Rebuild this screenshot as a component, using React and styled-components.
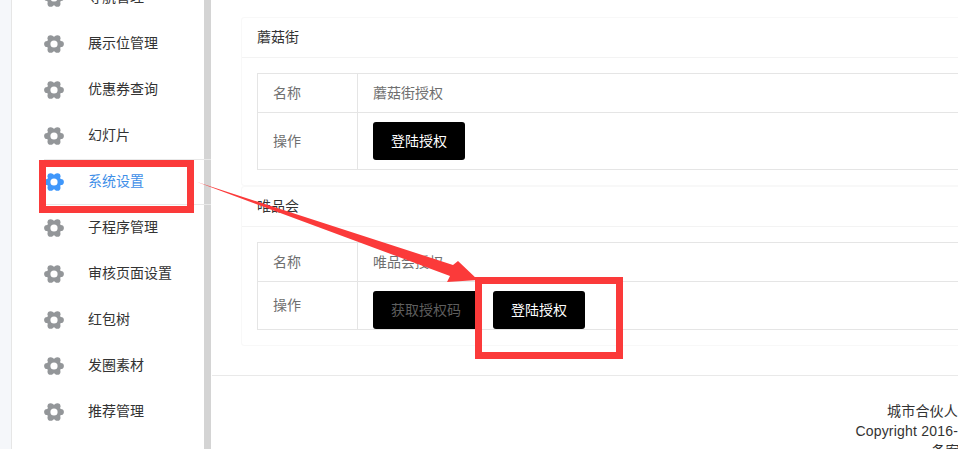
import React from "react";
import styled, { createGlobalStyle } from "styled-components";

const menus = [
  "导航管理",
  "展示位管理",
  "优惠券查询",
  "幻灯片",
  "系统设置",
  "子程序管理",
  "审核页面设置",
  "红包树",
  "发圈素材",
  "推荐管理",
];

const GearIcon = ({ active }) => {
  const color = active ? "#3f97fb" : "#939699";
  return (
    <Gear viewBox="0 0 20 20">
      {[0, 60, 120, 180, 240, 300].map((deg) => (
        <circle
          key={deg}
          cx={10 + 6.8 * Math.cos((deg * Math.PI) / 180)}
          cy={10 + 6.6 * Math.sin((deg * Math.PI) / 180)}
          r="3.1"
          fill={color}
        />
      ))}
      <circle cx="10" cy="10" r="7.4" fill={color} />
      <circle cx="10" cy="10" r="3.6" fill="#fff" />
    </Gear>
  );
};

const App = () => {
  return (
    <Page>
      <GlobalStyle />
      <Strip />
      <Sidebar>
        <Menu>
          {menus.map((name) => (
            <MenuItem key={name} $active={name === "系统设置"}>
              <GearIcon active={name === "系统设置"} />
              <MenuText>{name}</MenuText>
            </MenuItem>
          ))}
        </Menu>
        <ScrollThumb />
      </Sidebar>
      <Main>
        <Content>
          <Panel>
            <PanelTitle>蘑菇街</PanelTitle>
            <PanelBody>
              <Table>
                <tbody>
                  <Row>
                    <LabelCell>名称</LabelCell>
                    <Cell>蘑菇街授权</Cell>
                  </Row>
                  <Row $height={57}>
                    <LabelCell>操作</LabelCell>
                    <Cell>
                      <Button>登陆授权</Button>
                    </Cell>
                  </Row>
                </tbody>
              </Table>
            </PanelBody>
          </Panel>
          <Panel>
            <PanelTitle>唯品会</PanelTitle>
            <PanelBody>
              <Table>
                <tbody>
                  <Row>
                    <LabelCell>名称</LabelCell>
                    <Cell>唯品会授权</Cell>
                  </Row>
                  <Row $height={48}>
                    <LabelCell $lift>操作</LabelCell>
                    <ButtonCell>
                      <Button $muted>获取授权码</Button>
                      <Button>登陆授权</Button>
                    </ButtonCell>
                  </Row>
                </tbody>
              </Table>
            </PanelBody>
          </Panel>
        </Content>
        <Footer>
          <FooterLine>城市合伙人</FooterLine>
          <FooterLine>Copyright 2016-</FooterLine>
          <FooterClipped>备案号</FooterClipped>
        </Footer>
      </Main>
      <MarkBox $x={39} $y={160} $w={155} $h={53} />
      <MarkBox $x={475} $y={277} $w={148} $h={82} />
      <Arrow viewBox="0 0 958 449">
        <polygon
          points="197,182 453,265 458,261 478,280 447,282 450,276"
          fill="#fb3a3a"
        />
      </Arrow>
    </Page>
  );
};

export default App;

const GlobalStyle = createGlobalStyle`
  html, body {
    margin: 0;
    padding: 0;
    background: #fff;
  }
  * {
    box-sizing: border-box;
  }
`;

const Page = styled.div`
  position: relative;
  display: flex;
  width: 958px;
  height: 449px;
  overflow: hidden;
  background: #fff;
  font-family: "Liberation Sans", "Noto Sans CJK SC", sans-serif;
  font-size: 14px;
  color: #333;
`;

const Strip = styled.div`
  flex: 0 0 12px;
  background: #f5f7fa;
  border-right: 1px solid #e6e6e6;
`;

const Sidebar = styled.aside`
  position: relative;
  flex: 0 0 200px;
  display: flex;
`;

const Menu = styled.ul`
  flex: 0 0 192px;
  margin: -25px 0 0;
  padding: 0 0 0 32px;
  list-style: none;
`;

const MenuItem = styled.li`
  position: relative;
  z-index: 1;
  display: flex;
  align-items: center;
  gap: 24px;
  height: 46px;
  margin-right: ${(p) => (p.$active ? "-7px" : "0")};
  color: ${(p) => (p.$active ? "#3f8fe8" : "#333")};
  border-top: ${(p) => (p.$active ? "1px solid #e8e8e8" : "none")};
  border-bottom: ${(p) => (p.$active ? "1px solid #e8e8e8" : "none")};
  white-space: nowrap;
`;

const MenuText = styled.span`
  margin-bottom: 4px;
`;

const Gear = styled.svg`
  flex: 0 0 20px;
  width: 20px;
  height: 20px;
`;

const ScrollThumb = styled.div`
  flex: 0 0 7px;
  background: #d4d4d4;
`;

const Main = styled.main`
  flex: 1;
  min-width: 0;
  display: flex;
  flex-direction: column;
`;

const Content = styled.div`
  padding: 17px 0 29px 29px;
  margin-right: -40px;
  border-bottom: 1px solid #e9e9e9;
`;

const Panel = styled.section`
  border: 1px solid #f8f8f8;
  border-radius: 3px;
  background: #fff;
`;

const PanelTitle = styled.h3`
  height: 40px;
  margin: 0;
  padding: 0 15px;
  border-bottom: 1px solid #f3f3f3;
  font-size: 14px;
  font-weight: 400;
  line-height: 39px;
  color: #333;
`;

const PanelBody = styled.div`
  padding: 15px;
`;

const Table = styled.table`
  width: 100%;
  border-collapse: collapse;
  table-layout: fixed;
  color: #6f6f6f;
`;

const Row = styled.tr`
  height: ${(p) => p.$height || 39}px;
`;

const Cell = styled.td`
  padding: 0 15px;
  border: 1px solid #e5e5e5;
  line-height: 20px;
`;

const LabelCell = styled(Cell)`
  width: 100px;
  padding-bottom: ${(p) => (p.$lift ? "2px" : "0")};
`;

const ButtonCell = styled(Cell)`
  padding-top: 9px;
  padding-bottom: 0;
  font-size: 0;
  line-height: 0;
  vertical-align: top;
`;

const Button = styled.button`
  height: 38px;
  padding: 0 18px 2px;
  border: none;
  border-radius: 3px;
  background: #000;
  color: ${(p) => (p.$muted ? "#5e5e5e" : "#fff")};
  font-family: inherit;
  font-size: 14px;
  vertical-align: top;
  & + & {
    margin-left: 14px;
  }
`;

const Footer = styled.footer`
  display: flex;
  flex-direction: column;
  align-items: flex-end;
  padding-top: 25px;
  color: #333;
  line-height: 20px;
`;

const FooterLine = styled.div`
  white-space: nowrap;
  letter-spacing: 0.2px;
`;

const FooterClipped = styled(FooterLine)`
  margin-right: -16px;
`;

const MarkBox = styled.div`
  position: absolute;
  left: ${(p) => p.$x}px;
  top: ${(p) => p.$y}px;
  width: ${(p) => p.$w}px;
  height: ${(p) => p.$h}px;
  border: 7px solid #fb3a3a;
  z-index: 3;
`;

const Arrow = styled.svg`
  position: absolute;
  inset: 0;
  width: 958px;
  height: 449px;
  z-index: 4;
  pointer-events: none;
`;
